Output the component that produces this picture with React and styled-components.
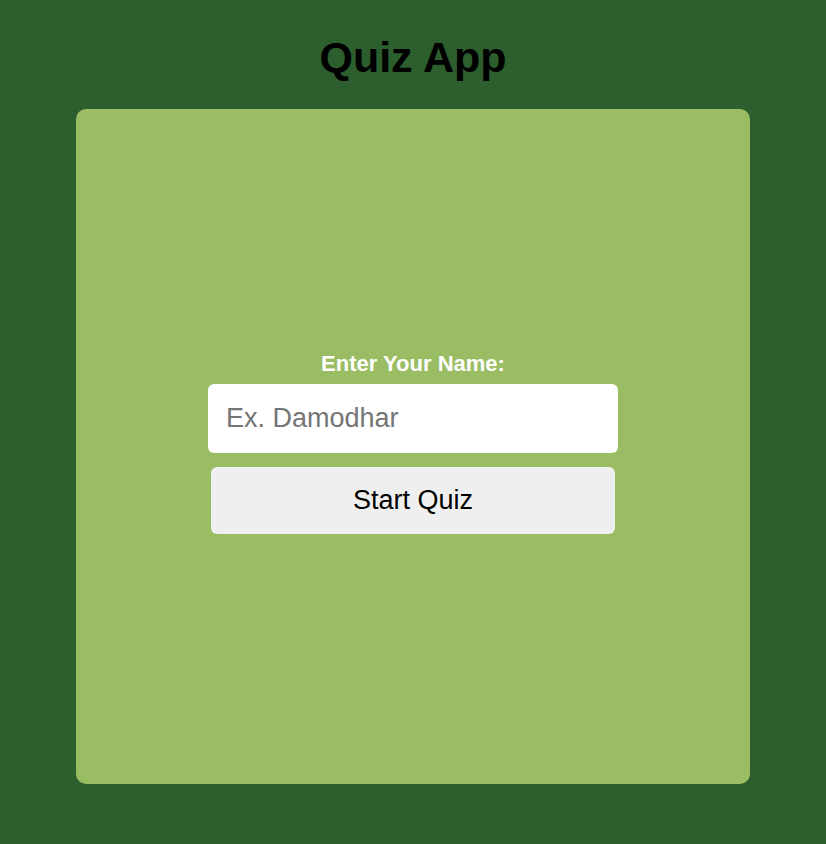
import React from 'react'
import styled, { createGlobalStyle } from "styled-components"

const GlobalStyle = createGlobalStyle`
  body {
    margin: 0;
    background: #2c5e2e;
    font-family: "Liberation Sans", Arial, sans-serif;
  }
`

const Page = styled.div`
  display: flex;
  flex-direction: column;
  align-items: center;
  padding-top: 32px;
`

const Title = styled.h1`
  margin: 0 0 27px;
  font-size: 43px;
  line-height: 50px;
  font-weight: 700;
  color: #000;
`

const Card = styled.div`
  width: 674px;
  height: 675px;
  box-sizing: border-box;
  padding-bottom: 8px;
  background: #9abd63;
  border-radius: 10px;
  display: flex;
  flex-direction: column;
  align-items: center;
  justify-content: center;
`

const Label = styled.label`
  font-size: 22px;
  line-height: 25px;
  font-weight: 700;
  color: #fff;
  margin-bottom: 8px;
`

const NameInput = styled.input`
  width: 410px;
  height: 69px;
  box-sizing: border-box;
  border: none;
  border-radius: 6px;
  padding: 0 18px;
  font-size: 27px;
  font-family: inherit;
  background: #fff;
  outline: none;
  &::placeholder {
    color: #757575;
  }
`

const StartButton = styled.button`
  width: 404px;
  height: 67px;
  margin-top: 14px;
  border: none;
  border-radius: 6px;
  background: #efefef;
  color: #000;
  font-size: 27px;
  font-family: inherit;
  cursor: pointer;
`

const App = () => {
  return (
    <Page>
      <GlobalStyle />
      <Title>Quiz App</Title>
      <Card>
        <Label htmlFor="name">Enter Your Name:</Label>
        <NameInput id="name" placeholder="Ex. Damodhar" />
        <StartButton>Start Quiz</StartButton>
      </Card>
    </Page>
  )
}

export default App
